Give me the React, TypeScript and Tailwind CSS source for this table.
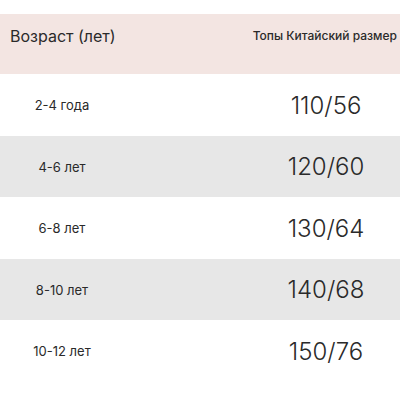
const rows = [
  { age: "2-4 года", size: "110/56" },
  { age: "4-6 лет", size: "120/60" },
  { age: "6-8 лет", size: "130/64" },
  { age: "8-10 лет", size: "140/68" },
  { age: "10-12 лет", size: "150/76" },
];

export default function App() {
  return (
    <div
      className="w-[400px] h-[400px] bg-white pt-[14px] text-[#2a2a2a] overflow-hidden"
      style={{ fontFamily: "Inter, 'Noto Sans', sans-serif" }}
    >
      <div className="h-[60px] bg-[#f3e5e2] flex items-start justify-between pl-[10px] pr-[3px] pt-[12px]">
        <span className="text-[16px] leading-[20px]">Возраст (лет)</span>
        <span className="text-[12px] leading-[20px] font-medium">Топы Китайский размер</span>
      </div>
      {rows.map((r, i) => (
        <div
          key={r.age}
          className={`flex items-center ${i % 2 === 1 ? "bg-[#e7e7e7] h-[61px]" : "bg-white h-[62px]"}`}
        >
          <div className="w-[124px] text-center text-[13px] pt-[2px]">{r.age}</div>
          <div className="ml-auto mr-[9px] w-[130px] text-center text-[24px] font-light pt-[1px]">
            {r.size}
          </div>
        </div>
      ))}
    </div>
  );
}
